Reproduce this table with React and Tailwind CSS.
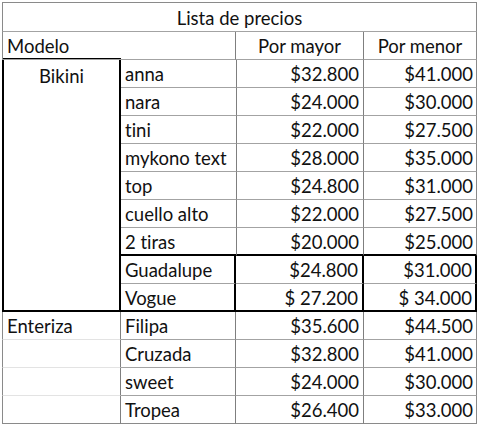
import React from "react";

const bikini = [
  ["anna", "$32.800", "$41.000"],
  ["nara", "$24.000", "$30.000"],
  ["tini", "$22.000", "$27.500"],
  ["mykono text", "$28.000", "$35.000"],
  ["top", "$24.800", "$31.000"],
  ["cuello alto", "$22.000", "$27.500"],
  ["2 tiras", "$20.000", "$25.000"],
];
const special = [
  ["Guadalupe", "$24.800", "$31.000"],
  ["Vogue", "$ 27.200", "$ 34.000"],
];
const enteriza = [
  ["Filipa", "$35.600", "$44.500"],
  ["Cruzada", "$32.800", "$41.000"],
  ["sweet", "$24.000", "$30.000"],
  ["Tropea", "$26.400", "$33.000"],
];

const cell = "flex items-center pt-[2px] leading-none whitespace-nowrap overflow-hidden";
const gv = "border-r border-r-[#7f7f7f]";
const gh = "border-b border-b-[#a3a3a3]";

export default function App() {
  return (
    <div className="bg-white w-[480px] h-[425px] pt-[2px] pl-[2px] text-[18.5px] text-[#111] font-['Lato',sans-serif] [font-variant-ligatures:none]">
      <div className="grid grid-cols-[119px_115px_128px_113px] grid-rows-[30px_28px_repeat(13,28px)]">
        <div className={`${cell} col-span-4 justify-center border border-[#8a8a8a] border-b-[#a3a3a3]`}>
          Lista de precios
        </div>
        <div className={`${cell} relative col-span-2 pl-[4px] border-l border-l-[#8a8a8a] ${gv} ${gh}`}>
          Modelo
          <span className="absolute left-[-1px] -bottom-px w-[119px] h-[2px] bg-black" />
        </div>
        <div className={`${cell} justify-center ${gv} ${gh}`}>Por mayor</div>
        <div className={`${cell} justify-center border-r border-r-[#8a8a8a] ${gh}`}>Por menor</div>

        <div className="row-span-9 flex justify-center pt-[7px] leading-none border-l-2 border-r-2 border-b-2 border-black">
          Bikini
        </div>
        {bikini.map(([n, a, b], i) => {
          const last = i === bikini.length - 1;
          const hb = last ? "border-b-2 border-b-black" : gh;
          return (
            <React.Fragment key={n}>
              <div className={`${cell} pl-[4px] ${hb}`}>{n}</div>
              <div className={`${cell} justify-end pr-[4px] ${gv} border-l border-l-[#7f7f7f] ${hb}`}>{a}</div>
              <div className={`${cell} justify-end pr-[3px] border-r border-r-[#8a8a8a] ${hb}`}>{b}</div>
            </React.Fragment>
          );
        })}
        {special.map(([n, a, b], i) => {
          const hb = i === 1 ? "border-b-2 border-b-black" : gh;
          return (
            <React.Fragment key={n}>
              <div className={`${cell} pl-[4px] border-r-2 border-r-black ${hb}`}>{n}</div>
              <div className={`${cell} justify-end pr-[4px] border-r-2 border-r-black ${hb}`}>{a}</div>
              <div className={`${cell} justify-end pr-[3px] border-r-2 border-r-black ${hb}`}>{b}</div>
            </React.Fragment>
          );
        })}
        {enteriza.map(([n, a, b], i) => {
          const last = i === enteriza.length - 1;
          return (
            <React.Fragment key={n}>
              <div
                className={`${cell} pl-[4px] border-l border-l-[#8a8a8a] ${gv} border-b ${
                  last ? "border-b-[#8a8a8a]" : "border-b-[#e3e3e3]"
                }`}
              >
                {i === 0 ? "Enteriza" : ""}
              </div>
              <div className={`${cell} pl-[4px] ${gv} ${last ? "border-b border-b-[#8a8a8a]" : gh}`}>{n}</div>
              <div className={`${cell} justify-end pr-[4px] ${gv} ${last ? "border-b border-b-[#8a8a8a]" : gh}`}>{a}</div>
              <div className={`${cell} justify-end pr-[3px] border-r border-r-[#8a8a8a] ${last ? "border-b border-b-[#8a8a8a]" : gh}`}>{b}</div>
            </React.Fragment>
          );
        })}
      </div>
    </div>
  );
}
